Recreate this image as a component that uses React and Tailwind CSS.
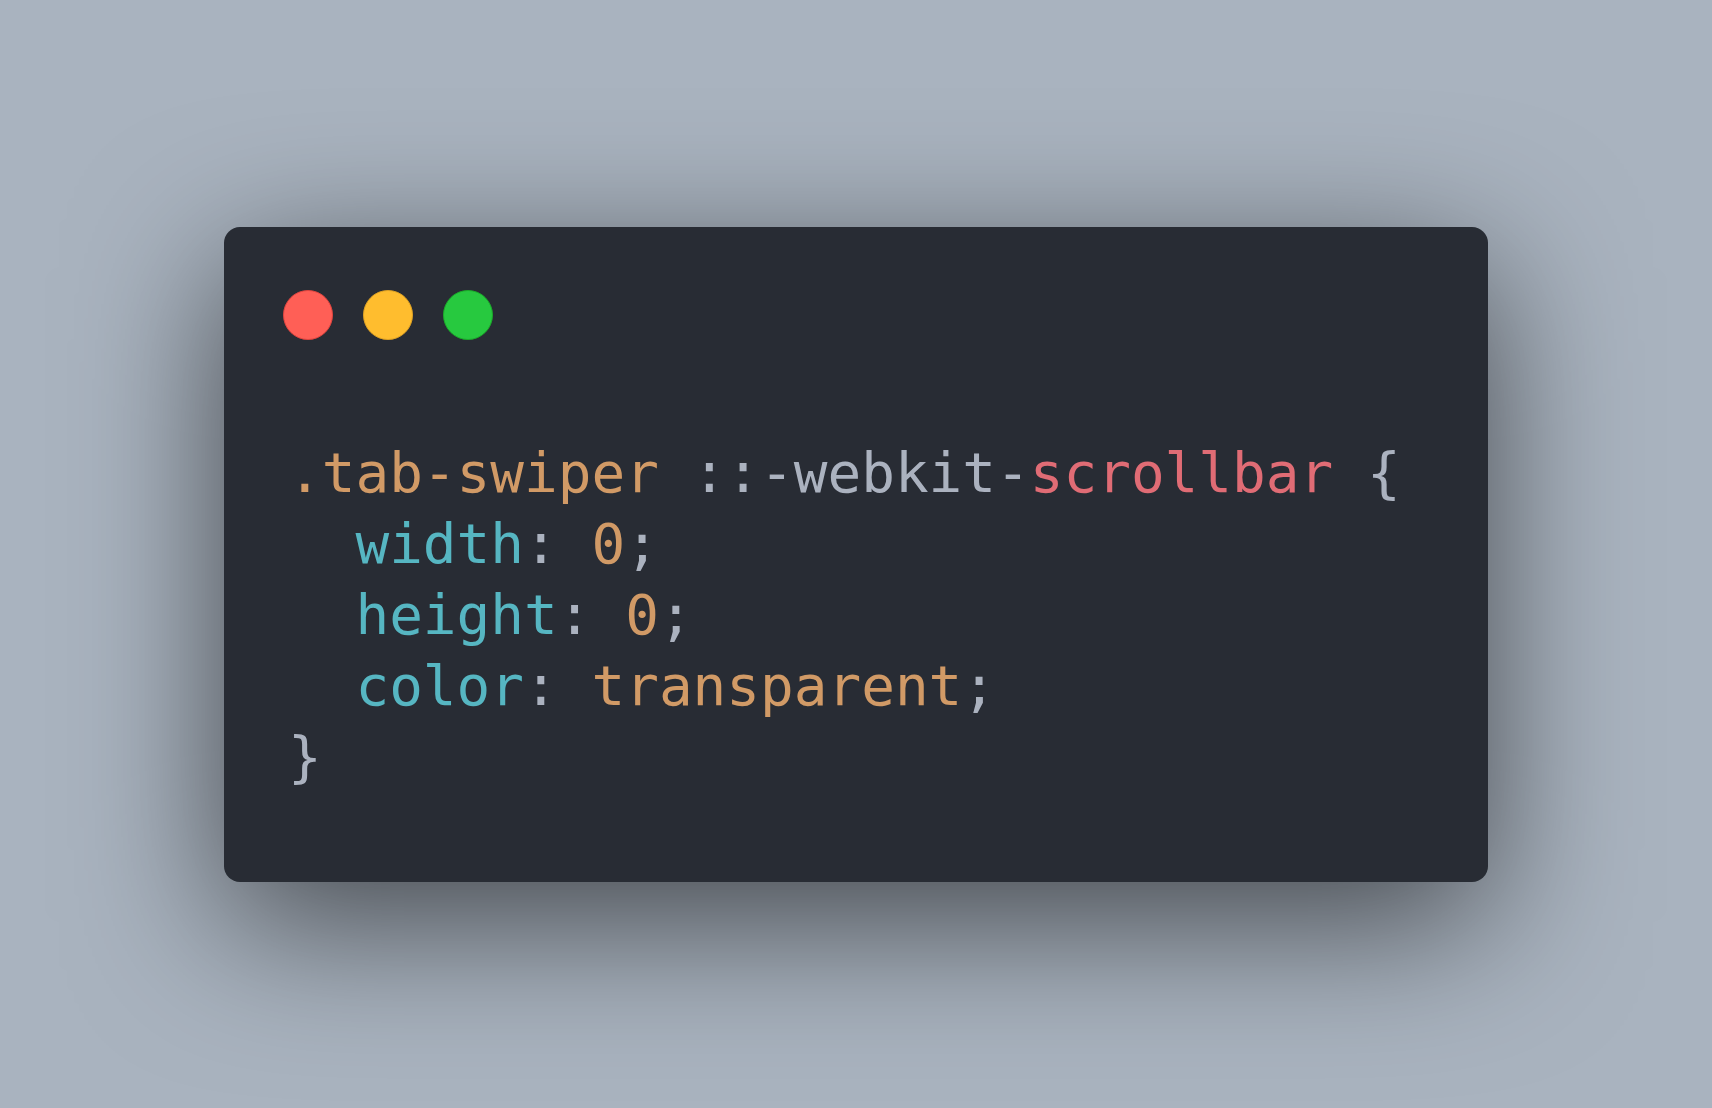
const mono = { fontFamily: '"DejaVu Sans Mono", "Liberation Mono", monospace' };

function Dots() {
  return (
    <div className="flex gap-[30px]">
      <span className="w-[50px] h-[50px] rounded-full bg-[#ff5f56] border border-[#e0443e]" />
      <span className="w-[50px] h-[50px] rounded-full bg-[#ffbd2e] border border-[#dea123]" />
      <span className="w-[50px] h-[50px] rounded-full bg-[#27c93f] border border-[#1aab29]" />
    </div>
  );
}

export default function App() {
  return (
    <div className="min-h-screen h-[1108px] bg-[#a9b3bf] flex items-center justify-center">
      <div className="w-[1264px] h-[655px] bg-[#282c34] rounded-[16px] shadow-[0_40px_150px_rgba(0,0,0,0.6)] pt-[63px] pl-[59px]">
        <Dots />
        <pre
          className="mt-[97px] ml-[5px] text-[56px] leading-[71px] text-[#abb2bf]"
          style={mono}
        >
          <span className="text-[#d19a66]">.tab-swiper</span>
          {' ::-webkit-'}
          <span className="text-[#e06c75]">scrollbar</span>
          {' {\n  '}
          <span className="text-[#56b6c2]">width</span>
          {': '}
          <span className="text-[#d19a66]">0</span>
          {';\n  '}
          <span className="text-[#56b6c2]">height</span>
          {': '}
          <span className="text-[#d19a66]">0</span>
          {';\n  '}
          <span className="text-[#56b6c2]">color</span>
          {': '}
          <span className="text-[#d19a66]">transparent</span>
          {';\n}'}
        </pre>
      </div>
    </div>
  );
}
